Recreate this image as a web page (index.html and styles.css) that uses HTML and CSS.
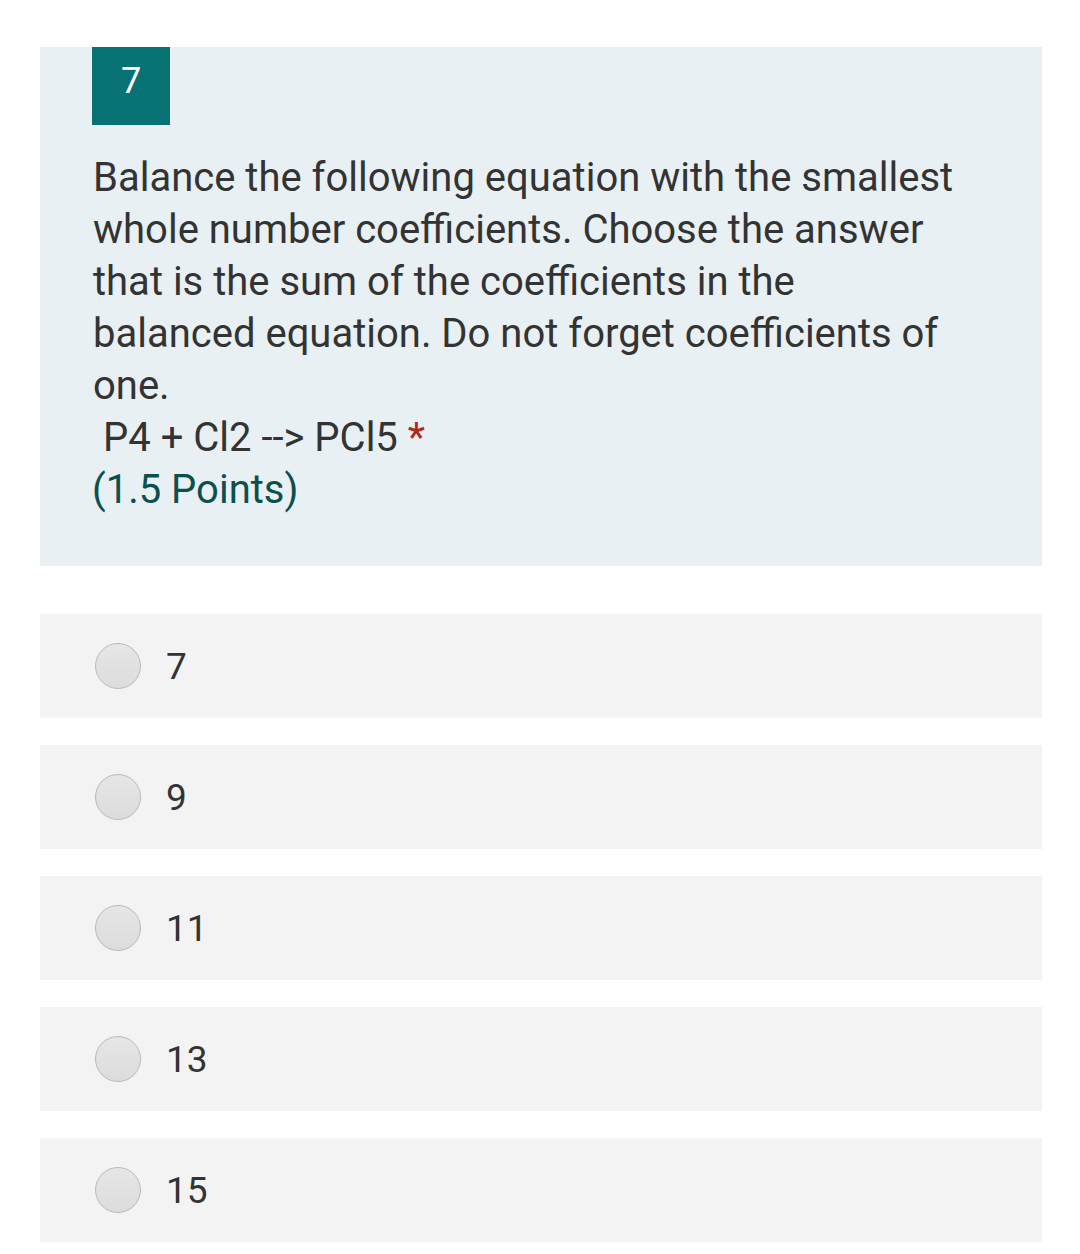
FILE: index.html
```html
<!DOCTYPE html>
<html>
<head>
<meta charset="utf-8">
<link rel="stylesheet" href="styles.css">
</head>
<body>
<div class="page">
  <section class="question">
    <div class="badge">7</div>
    <div class="qtext">
      <p class="title">Balance the following equation with the smallest whole number coefficients. Choose the answer that is the sum of the coefficients in the balanced equation. Do not forget coefficients of one.</p>
      <p class="eq">P4 + Cl2 --&gt; PCl5 <span class="req">*</span></p>
      <p class="points">(1.5 Points)</p>
    </div>
  </section>
  <div class="options">
    <label class="option"><span class="radio"></span><span class="label">7</span></label>
    <label class="option"><span class="radio"></span><span class="label">9</span></label>
    <label class="option"><span class="radio"></span><span class="label">11</span></label>
    <label class="option"><span class="radio"></span><span class="label">13</span></label>
    <label class="option"><span class="radio"></span><span class="label">15</span></label>
  </div>
</div>
</body>
</html>
```
FILE: styles.css
```css
html, body {
  margin: 0;
  padding: 0;
  background: #ffffff;
}
body {
  font-family: Roboto, "Noto Sans", sans-serif;
  color: #333333;
}
.page {
  padding: 47px 38px 0 40px;
}
.question {
  background: #e8f0f3;
  padding: 0 80px 50px 52px;
}
.badge {
  width: 78px;
  height: 78px;
  box-sizing: border-box;
  padding-bottom: 10px;
  background: #077173;
  color: #ffffff;
  font-size: 36px;
  display: flex;
  align-items: center;
  justify-content: center;
}
.qtext {
  padding-top: 27px;
  font-size: 40px;
  line-height: 52px;
}
.qtext p {
  margin: 0;
}
.title {
  padding-left: 1px;
}
.eq {
  padding-left: 11px;
}
.req {
  color: #b3261e;
}
.points {
  color: #0b4f4f;
}
.options {
  display: flex;
  flex-direction: column;
  gap: 27px;
  margin-top: 48px;
}
.option {
  display: flex;
  align-items: center;
  height: 104px;
  background: #f3f3f3;
  padding-left: 55px;
}
.radio {
  width: 44px;
  height: 44px;
  border-radius: 50%;
  border: 1px solid #b9b9b9;
  background: linear-gradient(#e6e6e6, #dcdcdc);
  flex: none;
}
.label {
  margin-left: 25px;
  font-size: 37px;
  color: #333333;
}
```
